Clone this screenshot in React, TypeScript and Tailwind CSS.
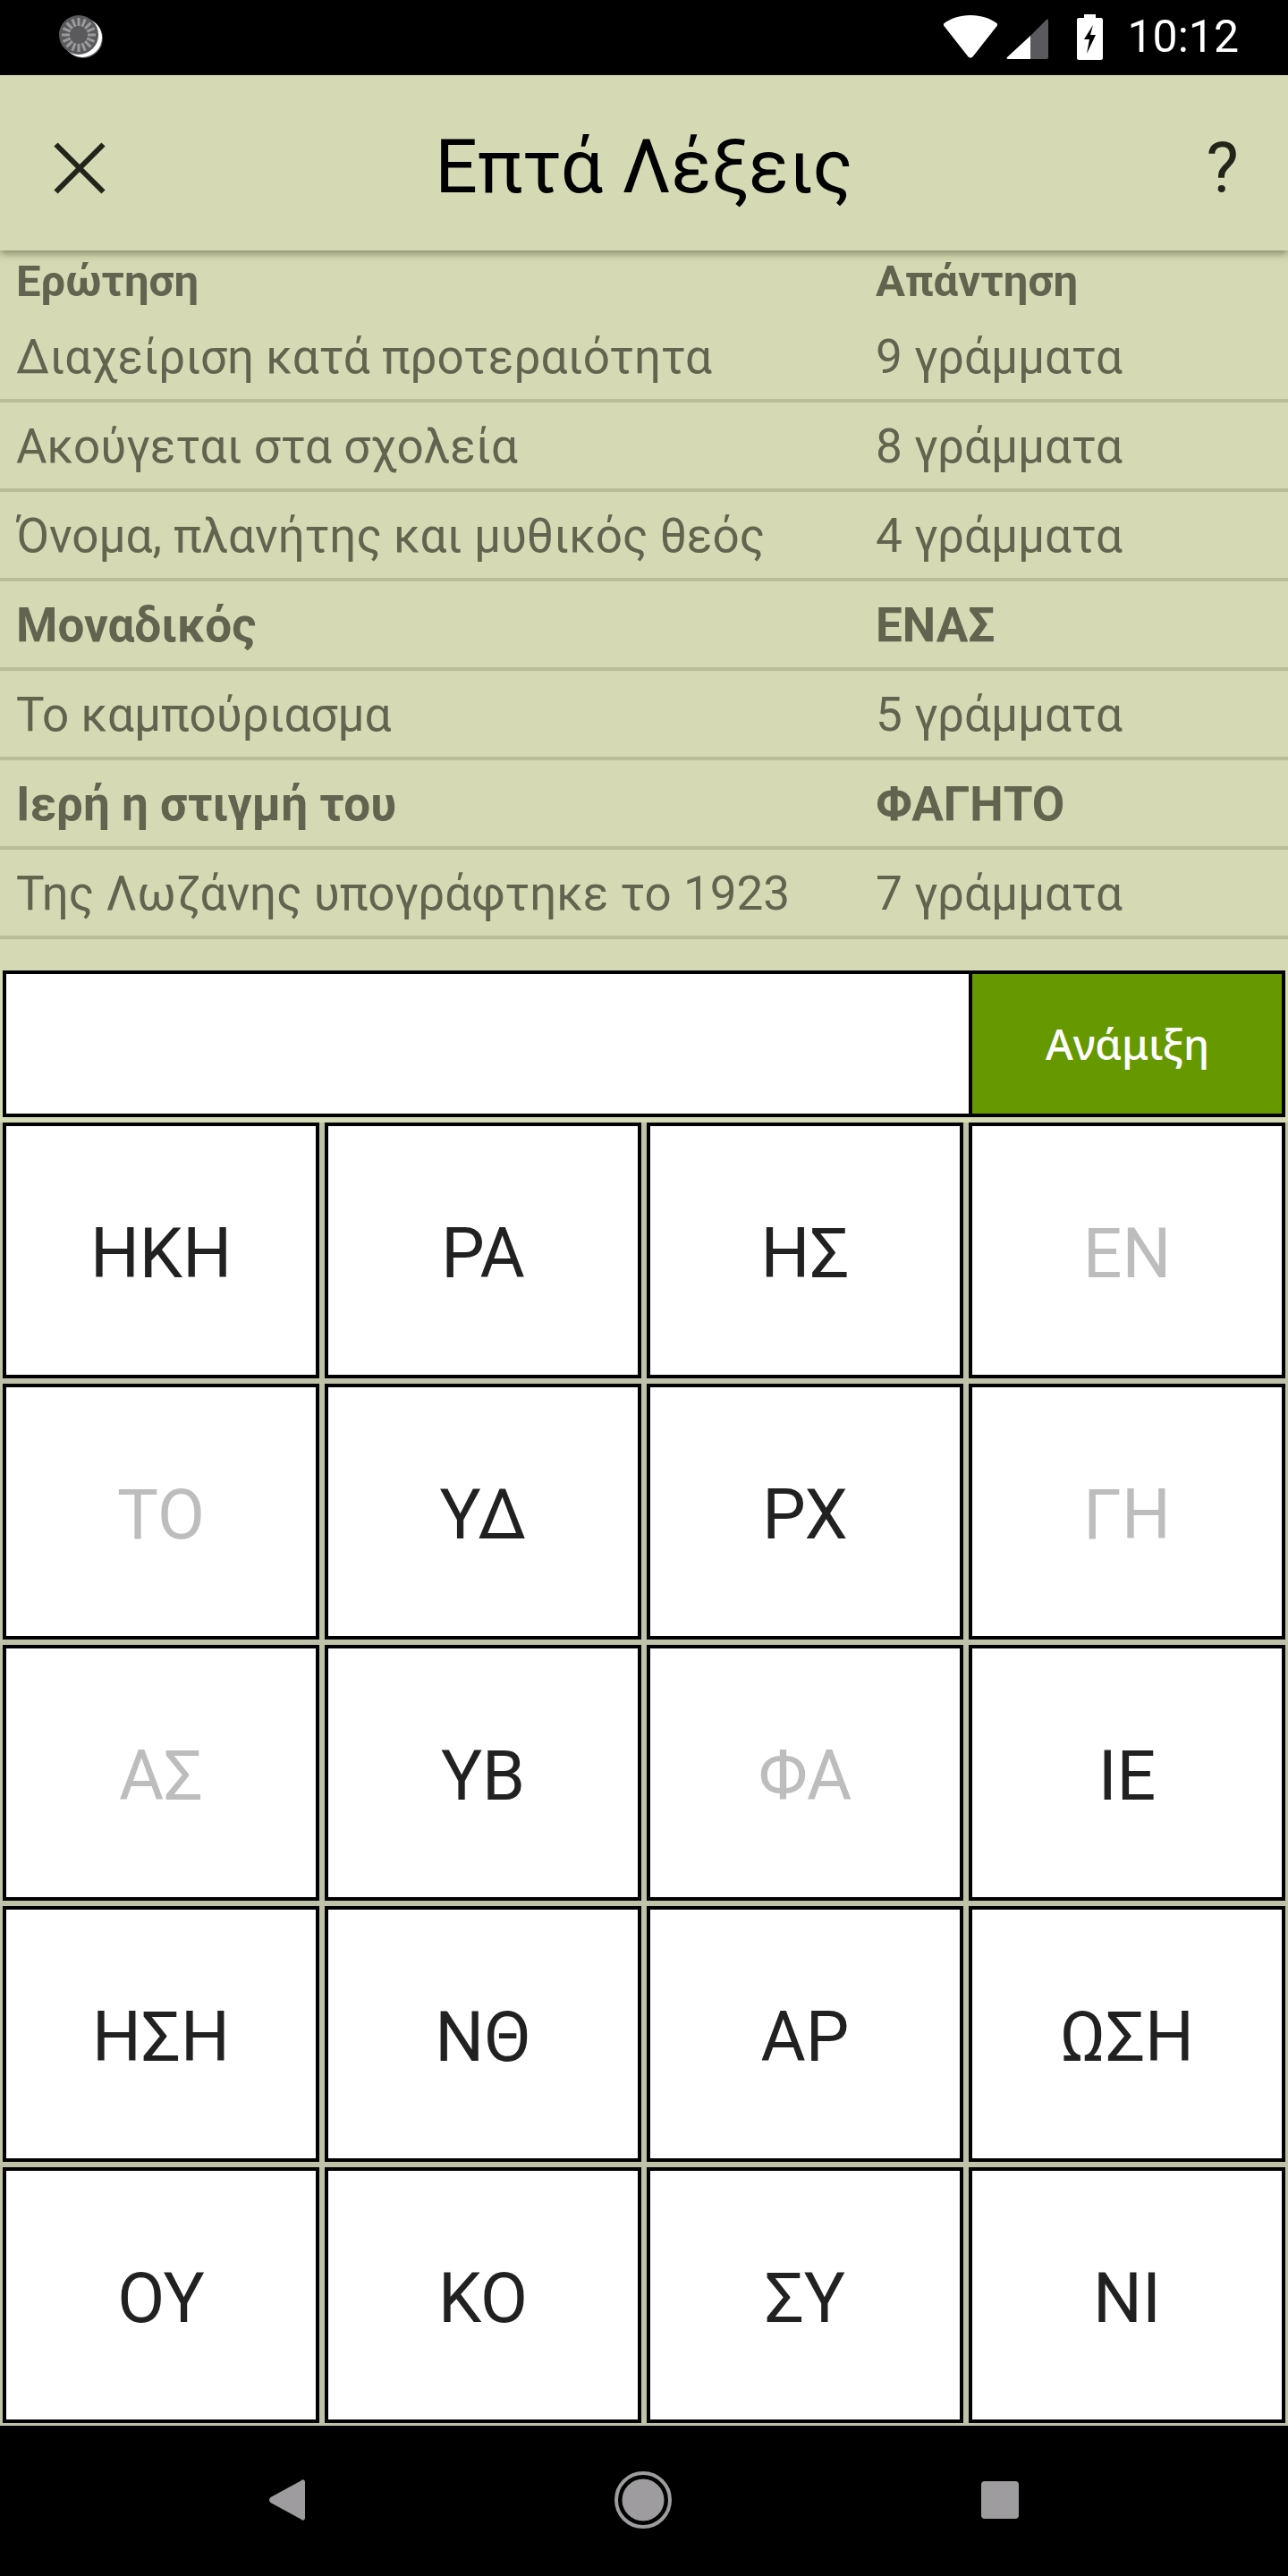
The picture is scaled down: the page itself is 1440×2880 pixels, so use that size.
const FONT = "font-['Roboto',sans-serif]";

const rows = [
  { q: 'Διαχείριση κατά προτεραιότητα', a: '9 γράμματα', solved: false },
  { q: 'Ακούγεται στα σχολεία', a: '8 γράμματα', solved: false },
  { q: 'Όνομα, πλανήτης και μυθικός θεός', a: '4 γράμματα', solved: false },
  { q: 'Μοναδικός', a: 'ΕΝΑΣ', solved: true },
  { q: 'Το καμπούριασμα', a: '5 γράμματα', solved: false },
  { q: 'Ιερή η στιγμή του', a: 'ΦΑΓΗΤΟ', solved: true },
  { q: 'Της Λωζάνης υπογράφτηκε το 1923', a: '7 γράμματα', solved: false },
];

const tiles = [
  { t: 'ΗΚΗ' }, { t: 'ΡΑ' }, { t: 'ΗΣ' }, { t: 'ΕΝ', used: true },
  { t: 'ΤΟ', used: true }, { t: 'ΥΔ' }, { t: 'ΡΧ' }, { t: 'ΓΗ', used: true },
  { t: 'ΑΣ', used: true }, { t: 'ΥΒ' }, { t: 'ΦΑ', used: true }, { t: 'ΙΕ' },
  { t: 'ΗΣΗ' }, { t: 'ΝΘ' }, { t: 'ΑΡ' }, { t: 'ΩΣΗ' },
  { t: 'ΟΥ' }, { t: 'ΚΟ' }, { t: 'ΣΥ' }, { t: 'ΝΙ' },
];

function Spinner() {
  const ticks = Array.from({ length: 16 }, (_, i) => i * 22.5);
  return (
    <svg width="50" height="52" viewBox="0 0 50 52">
      <circle cx="27" cy="28" r="22" fill="#5b5b5f" />
      <circle cx="26" cy="27" r="22" fill="#ffffff" />
      <circle cx="22" cy="24" r="22" fill="#5a5a5e" />
      {ticks.map((a) => (
        <rect key={a} x="20.5" y="5" width="3" height="9" fill="#9a9a9c" transform={`rotate(${a} 22 24)`} />
      ))}
    </svg>
  );
}

function StatusBar() {
  return (
    <div className="flex h-[84px] items-center justify-between bg-black pl-[66px] pr-[55px] pb-[2px]">
      <Spinner />
      <div className="flex items-center">
        <svg width="60" height="48" viewBox="0 0 60 48" className="mr-[10px]">
          <path d="M30 0C18 0 8 3.500 0 9.500C-.5 10 -.5 11 0 11.500L27.500 46.500C29 48 31 48 32.500 46.500L60 11.500C60.500 11 60.500 10 60 9.500C52 3.500 42 0 30 0Z" fill="#fff" />
        </svg>
        <svg width="47" height="47" viewBox="0 0 47 47" className="mr-[32px] mt-[2px]">
          <path d="M27 21V47H2C.5 47 0 46 1 45L27 21Z" fill="#fff" />
          <path d="M27 21L45 3C46 2 47 2.500 47 4V45C47 46 46 47 45 47H27Z" fill="#5a5a5e" />
        </svg>
        <svg width="29" height="51" viewBox="0 0 29 51" className="mr-[27px]">
          <path d="M8 0H21V4H27C28 4 29 5 29 6V49C29 50 28 51 27 51H2C1 51 0 50 0 49V6C0 5 1 4 2 4H8Z" fill="#fff" />
          <path d="M18 12L8 28H14L11 44L21 23H15Z" fill="#000" />
        </svg>
        <span className={`${FONT} text-[50px] font-normal leading-none text-white`}>10:12</span>
      </div>
    </div>
  );
}

function Toolbar() {
  return (
    <div className="relative z-10 flex h-[196px] items-center bg-[#d6dab4] pt-[12px] shadow-[0_4px_8px_rgba(70,70,40,0.5)]">
      <div className="w-[150px] pl-[60px]">
        <svg width="58" height="58" viewBox="0 0 58 58">
          <path d="M2.500 2.500L55.500 55.500M55.500 2.500L2.500 55.500" stroke="#23241a" strokeWidth="6" />
        </svg>
      </div>
      <h1 className={`${FONT} flex-1 pb-[2px] text-center text-[84px] font-normal leading-none text-black`}>Επτά Λέξεις</h1>
      <div className={`${FONT} w-[150px] pr-[55px] pt-[2px] text-right text-[77px] leading-none text-[#23241a]`}>?</div>
    </div>
  );
}

function QuestionTable() {
  return (
    <div className={`${FONT} text-[#63644f]`}>
      <div className="flex h-[70px] items-center text-[49px] font-bold">
        <div className="w-[979px] pl-[18px]">Ερώτηση</div>
        <div>Απάντηση</div>
      </div>
      {rows.map((r) => (
        <div key={r.q} className={`flex h-[100px] items-center border-b-4 border-[#b9bd98] pt-[4px] text-[53px] ${r.solved ? 'font-bold' : ''}`}>
          <div className="w-[979px] pl-[18px]">{r.q}</div>
          <div>{r.a}</div>
        </div>
      ))}
    </div>
  );
}

export default function App() {
  return (
    <div className="flex h-[2880px] w-[1440px] flex-col bg-[#d6dab4]">
      <StatusBar />
      <Toolbar />
      <QuestionTable />
      <div className="mt-[35px] flex h-[164px] px-[3px]">
        <div className="flex-1 border-4 border-r-0 border-black bg-white" />
        <button className="w-[354px] border-4 border-black bg-[#669900] pl-[1px] font-['Noto_Sans',sans-serif] text-[47px] font-medium text-white">Ανάμιξη</button>
      </div>
      <div className="mt-[6px] bg-[#bfc1a8] px-[3px] pb-[3px]">
        <div className="grid h-[1454px] grid-cols-4 grid-rows-5 gap-[6px]">
          {tiles.map((tile) => (
            <button
              key={tile.t}
              className={`${FONT} flex items-center justify-center border-4 border-black bg-white pt-[9px] text-[77px] ${tile.used ? 'text-[#bdbdbd]' : 'text-[#212121]'}`}
            >
              {tile.t}
            </button>
          ))}
        </div>
      </div>
      <div className="flex flex-1 items-center bg-black">
        <div className="flex w-full items-center justify-between pl-[301px] pr-[301px] pb-[2px]">
          <svg width="40" height="46" viewBox="0 0 40 46">
            <path d="M40 3V43C40 46 37 46.500 35.500 44.500L1.500 26C-.5 24 -.5 22 1.500 20L35.500 1.500C37 -.5 40 0 40 3Z" fill="#9e9c9f" />
          </svg>
          <svg width="64" height="64" viewBox="0 0 64 64">
            <circle cx="32" cy="32" r="30" fill="none" stroke="#9e9c9f" strokeWidth="4" />
            <circle cx="32" cy="32" r="23.500" fill="#9e9c9f" />
          </svg>
          <div className="h-[42px] w-[42px] rounded-[4px] bg-[#9e9c9f]" />
        </div>
      </div>
    </div>
  );
}
